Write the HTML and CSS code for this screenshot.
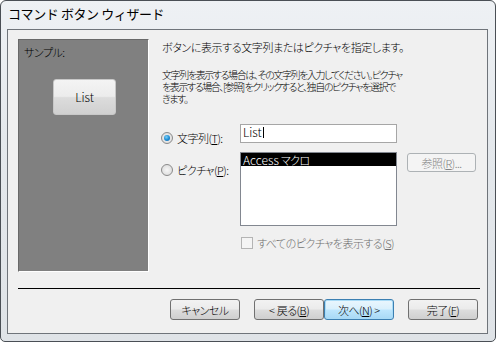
FILE: index.html
```html
<!DOCTYPE html>
<html lang="ja">
<head>
<meta charset="utf-8">
<title>コマンド ボタン ウィザード</title>
<link rel="stylesheet" href="styles.css">
</head>
<body>
<div class="window">
  <div class="titlebar"><span class="title">コマンド ボタン ウィザード</span></div>
  <div class="client">
    <div class="main">
      <div class="panel">
        <div class="sample-label">サンプル:</div>
        <div class="sample-btn latin">List</div>
      </div>
      <div class="content">
        <p class="intro">ボタンに表示する文字列またはピクチャを指定します。</p>
        <p class="desc">文字列を表示する場合は、その文字列を入力してください。ピクチャ<br>を表示する場合、[参照] をクリックすると、独自のピクチャを選択で<br>きます。</p>
        <div class="form">
          <div class="opt opt-text"><span class="radio checked"></span><span>文字列(<u>T</u>):</span></div>
          <div class="textbox latin">List<span class="caret"></span></div>
          <div></div>
          <div class="opt opt-pic"><span class="radio"></span><span>ピクチャ(<u>P</u>):</span></div>
          <div class="listbox"><div class="list-item selected"><span class="latin">Access</span> マクロ</div></div>
          <div class="btn disabled browse">参照(<u>R</u>)...</div>
          <div></div>
          <div class="check"><span class="checkbox"></span><span>すべてのピクチャを表示する(<u>S</u>)</span></div>
        </div>
      </div>
    </div>
    <div class="separator"></div>
    <div class="footer">
      <div class="btn">キャンセル</div>
      <div class="btn back"><span class="latin">&lt;</span>&nbsp;戻る(<u>B</u>)</div>
      <div class="btn default">次へ(<u>N</u>)&nbsp;<span class="latin">&gt;</span></div>
      <div class="btn finish">完了(<u>F</u>)</div>
    </div>
  </div>
</div>
</body>
</html>
```

FILE: styles.css
```css
* { box-sizing: border-box; }
html, body { margin: 0; padding: 0; background: #ffffff; }
body {
  font-family: "Noto Sans CJK JP", sans-serif;
  font-size: 11px;
  font-weight: 300;
  letter-spacing: -0.5px;
  color: #000;
  font-feature-settings: "palt";
  white-space: nowrap;
}
.latin { letter-spacing: 0; font-size: 12px; }
u { text-decoration: underline; text-underline-offset: 1px; }

.window {
  width: 496px;
  height: 342px;
  border: 1px solid #4a4f55;
  border-radius: 6px 6px 5px 5px;
  background: linear-gradient(180deg, #eef1f4 0%, #e4e8ec 40%, #dfe3e7 100%);
  padding: 0 7px 7px 6px;
  display: flex;
  flex-direction: column;
}
.titlebar {
  height: 28px;
  display: flex;
  align-items: center;
  padding-left: 1px;
  padding-bottom: 2px;
}
.title {
  font-size: 13px;
  font-weight: 400;
  line-height: 16px;
  letter-spacing: -0.4px;
  font-feature-settings: normal;
  color: #000;
}
.client {
  flex: 1;
  border: 1px solid #6f747a;
  background: #f0f0f0;
  display: flex;
  flex-direction: column;
}
.main {
  display: flex;
  padding: 9px 0 0 10px;
}
.panel {
  width: 131px;
  height: 233px;
  background: #808080;
  border-top: 1px solid #696969;
  border-left: 1px solid #696969;
  border-right: 1px solid #ffffff;
  border-bottom: 1px solid #ffffff;
  padding: 5px 0 0 5px;
}
.sample-label { line-height: 14px; }
.sample-btn {
  margin: 20px 0 0 29px;
  width: 63px;
  height: 36px;
  border: 1px solid #c8c8c8;
  border-radius: 3px;
  background: linear-gradient(180deg, #f4f4f4 0%, #ececec 48%, #dcdcdc 52%, #d0d0d0 100%);
  display: flex;
  align-items: center;
  justify-content: center;
  line-height: 14px;
}
.content {
  margin-left: 13px;
  padding-top: 1px;
  flex: 1;
}
.intro { margin: 0; line-height: 14px; letter-spacing: -0.4px; }
.desc { margin: 15px 0 0; font-size: 10px; line-height: 12px; letter-spacing: -1.4px; }
.form {
  margin-top: 19px;
  display: grid;
  grid-template-columns: 78px 157px auto;
  row-gap: 7px;
}
.opt {
  display: flex;
  align-items: center;
  line-height: 14px;
  height: 14px;
}
.opt-text { margin-top: 7px; }
.opt-pic { margin-top: 11px; }
.radio {
  width: 12px;
  height: 12px;
  margin: 0 4px 0 -1px;
  border-radius: 50%;
  border: 1px solid #8a8a8a;
  background: radial-gradient(circle at 50% 50%, #f6f6f6 0%, #e0e0e0 70%, #d0d0d0 100%);
  display: flex;
  align-items: center;
  justify-content: center;
  flex: none;
}
.radio.checked::after {
  content: "";
  width: 6px;
  height: 6px;
  border-radius: 50%;
  background: radial-gradient(circle at 40% 35%, #7fd0f5 0%, #1f8fd6 50%, #0b5fa8 100%);
}
.textbox {
  height: 19px;
  border: 1px solid #a6a6a6;
  background: #fff;
  padding: 0 2px;
  line-height: 14px;
  display: flex;
  align-items: flex-start;
}
.caret {
  display: inline-block;
  width: 1px;
  height: 11px;
  background: #000;
  margin: 2px 0 0 1px;
}
.listbox {
  height: 74px;
  border: 1px solid #828790;
  background: #fff;
}
.list-item {
  height: 13px;
  line-height: 13px;
  padding-left: 2px;
}
.list-item.selected { background: #000; color: #fff; }
.btn {
  width: 70px;
  height: 21px;
  border: 1px solid #707070;
  border-radius: 3px;
  background: linear-gradient(180deg, #f2f2f2 0%, #ebebeb 48%, #dddddd 52%, #cfcfcf 100%);
  display: flex;
  align-items: center;
  justify-content: center;
  line-height: 14px;
}
.btn .latin { font-size: 11px; }
.btn.disabled {
  border-color: #adb2b5;
  background: #f4f4f4;
  color: #838383;
}
.browse {
  width: 69px;
  height: 19px;
  margin: 1px 0 0 10px;
}
.check {
  grid-column: 2 / 4;
  display: flex;
  align-items: center;
  margin-top: 3px;
  color: #6d6d6d;
  line-height: 14px;
}
.checkbox {
  width: 12px;
  height: 12px;
  border: 1px solid #b4b4b4;
  background: #f4f4f4;
  margin: 0 4px 0 1px;
  flex: none;
}
.separator {
  margin: 16px 0 0 10px;
  width: 462px;
  height: 1px;
  background: #000;
}
.footer {
  display: flex;
  padding-left: 162px;
  margin-top: 10px;
}
.back { margin-left: 14px; }
.btn.default {
  border-color: #3c7fb1;
  background: linear-gradient(180deg, #eaf6fd 0%, #d9f0fc 48%, #bee6fd 52%, #a7d9f5 100%);
  box-shadow: inset 0 0 0 1px #a9dbf6;
}
.finish { margin-left: 14px; }
```
